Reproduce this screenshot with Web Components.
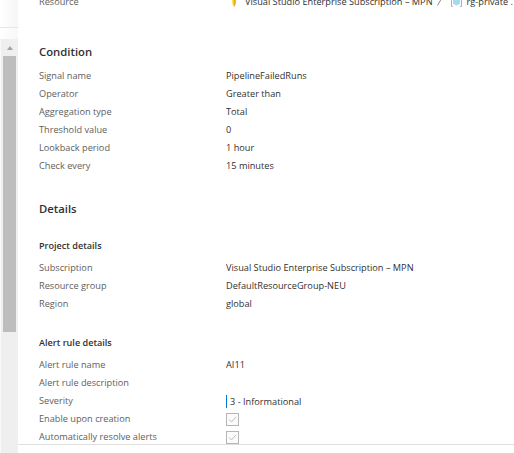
<!DOCTYPE html>
<html lang="en">

<head>
  <meta charset="UTF-8">
  <title>Alert rule review</title>
  <style>
    html, body { margin: 0; height: 453px; overflow: hidden; background: #fff; }
    body { font: 9.2px "Open Sans", "Noto Sans", sans-serif; color: #323130; }
    review-page { height: 453px; }
  </style>
</head>

<body>
  <review-page>
    <detail-row label="Resource" class="first">
      <span class="crumb" style="display:flex;align-items:center;white-space:pre">
        <svg width="6" height="12" viewBox="0 0 6 12" style="margin:0 8px 0 5px;flex:none"><path d="M1 0h4l-.5 8L3 11 1.500 8z" fill="#fcd116"/><path d="M3 0h2l-.5 8L3 11z" fill="#e8a90c"/></svg>
        <span>Visual Studio Enterprise Subscription – MPN</span>
        <svg width="5" height="8" viewBox="0 0 5 8" style="margin:0 9px 0 4px;flex:none"><path d="M.5 7.500l4-7" stroke="#8a8886" fill="none"/></svg>
        <svg width="11" height="10" viewBox="0 0 11 10" style="margin-right:5px;flex:none"><path d="M2 .5H.5v9H2M9 .5h1.500v9H9" stroke="#b0b0b0" fill="none"/><path d="M5.500 1.500l3.500 1.800v3.400L5.500 8.500 2 6.700V3.300z" fill="#a6d8ee"/></svg>
        <span>rg-private .</span>
      </span>
    </detail-row>
    <section-title>Condition</section-title>
    <detail-row label="Signal name">PipelineFailedRuns</detail-row>
    <detail-row label="Operator">Greater than</detail-row>
    <detail-row label="Aggregation type">Total</detail-row>
    <detail-row label="Threshold value">0</detail-row>
    <detail-row label="Lookback period">1 hour</detail-row>
    <detail-row label="Check every">15 minutes</detail-row>
    <section-title style="--top:25px">Details</section-title>
    <sub-title style="--top:19px">Project details</sub-title>
    <detail-row label="Subscription">Visual Studio Enterprise Subscription – MPN</detail-row>
    <detail-row label="Resource group">DefaultResourceGroup-NEU</detail-row>
    <detail-row label="Region">global</detail-row>
    <sub-title>Alert rule details</sub-title>
    <detail-row label="Alert rule name">AI11</detail-row>
    <detail-row label="Alert rule description"></detail-row>
    <detail-row label="Severity"><severity-value>3 - Informational</severity-value></detail-row>
    <detail-row label="Enable upon creation"><check-box></check-box></detail-row>
    <detail-row label="Automatically resolve alerts"><check-box></check-box></detail-row>
  </review-page>

  <template id="review-page">
    <style>
      :host { display: flex; background: #fff; overflow: hidden; }
      .strip {
        width: 18px; flex: none; display: flex; flex-direction: column;
        background: linear-gradient(to right, #fafafa, #f1f1f1);
      }
      .top { height: 27px; flex: none; border-bottom: 1px solid #e6e6e6; background: linear-gradient(to right, #fff, #f6f6f6); }
      .gap { height: 11px; flex: none; background: linear-gradient(to right, #fff, #f8f8f8); }
      .bar { flex: 1; margin-left: 1px; background: #efefef; display: flex; flex-direction: column; align-items: center; }
      .arrow { width: 0; height: 0; margin: 7px 0 6px; border: 3.500px solid transparent; border-top: 0; border-bottom: 4px solid #a3a3a3; }
      .thumb { width: 13px; height: 276px; background: #bdbdbd; }
      .main { flex: 1; min-width: 0; display: flex; flex-direction: column; }
      .body { flex: 1; min-height: 0; padding: 0 0 0 21px; overflow: hidden; }
      .foot { height: 8px; flex: none; border-top: 1px solid #e1dfdd; }
    </style>
    <div class="strip">
      <div class="top"></div>
      <div class="gap"></div>
      <div class="bar"><div class="arrow"></div><div class="thumb"></div></div>
    </div>
    <div class="main">
      <div class="body"><slot></slot></div>
      <div class="foot"></div>
    </div>
  </template>

  <template id="section-title">
    <style>
      :host { display: block; margin-top: var(--top, 32px); margin-bottom: 6px; font-size: 11.300px; font-weight: 600; line-height: 18px; color: #323130; }
    </style>
    <slot></slot>
  </template>

  <template id="sub-title">
    <style>
      :host { display: block; margin-top: var(--top, 21px); margin-bottom: 4px; font-size: 9.100px; font-weight: 600; line-height: 18px; color: #323130; }
    </style>
    <slot></slot>
  </template>

  <template id="detail-row">
    <style>
      :host { display: flex; height: 18px; line-height: 18px; white-space: nowrap; }
      :host(.first) { margin-top: -7px; }
      .label { width: 187px; flex: none; color: #605e5c; }
      .value { flex: 1; min-width: 0; color: #323130; overflow: hidden; display: flex; align-items: center; }
    </style>
    <div class="label" id="label"></div>
    <div class="value"><slot></slot></div>
  </template>

  <template id="severity-value">
    <style>
      :host { display: inline-block; margin-left: -1px; border-left: 2px solid #0078d4; padding-left: 3px; height: 13px; line-height: 13px; }
    </style>
    <slot></slot>
  </template>

  <template id="check-box">
    <style>
      :host { display: block; width: 11px; height: 11px; border: 1px solid #b5b5b5; background: #fbfbfb; }
      svg { display: block; }
    </style>
    <svg width="11" height="11" viewBox="0 0 11 11"><path d="M2 5.500l2.500 2.500 4.500-5" fill="none" stroke="#bdbdbd" stroke-width="1"/></svg>
  </template>

  <script>
    class TemplateElement extends HTMLElement {
      constructor() {
        super()
        let shadowRoot = this.attachShadow({ mode: 'open' })
        shadowRoot.appendChild(document.getElementById(this.localName).content.cloneNode(true))
      }
    }

    class DetailRow extends TemplateElement {
      connectedCallback() {
        this.shadowRoot.getElementById('label').textContent = this.getAttribute('label') || ''
      }
    }

    ;['review-page', 'section-title', 'sub-title', 'severity-value', 'check-box'].forEach((name) => {
      window.customElements.define(name, class extends TemplateElement {})
    })
    window.customElements.define('detail-row', DetailRow)
  </script>
</body>

</html>
